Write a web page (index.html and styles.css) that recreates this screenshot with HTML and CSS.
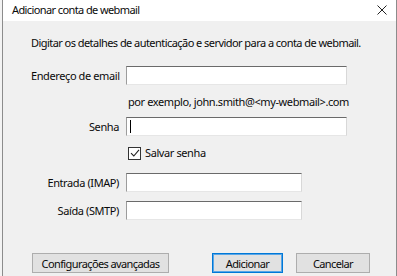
FILE: index.html
```html
<!DOCTYPE html>
<html>
	<head>
		<meta charset="utf-8">
		<title>Adicionar conta de webmail</title>
		<link rel="stylesheet" href="styles.css">
	</head>
	<body>
		<div class="dialog">
			<div class="titlebar">
				<span class="title">Adicionar conta de webmail</span>
				<svg class="close" width="10" height="10" viewBox="0 0 10 10"><path d="M0.5 0.5L9.5 9.5M9.5 0.5L0.5 9.5" stroke="#222" stroke-width="1"/></svg>
			</div>
			<div class="content">
				<p class="intro">Digitar os detalhes de autenticação e servidor para a conta de webmail.</p>
				<div class="form">
					<label class="lbl">Endereço de email</label>
					<div class="field wide"></div>
					<span></span>
					<span class="hint">por exemplo, john.smith@&lt;my-webmail&gt;.com</span>
					<label class="lbl">Senha</label>
					<div class="field wide"><span class="caret"></span></div>
					<span></span>
					<div class="check"><span class="box"><svg width="10" height="10" viewBox="0 0 10 10"><path d="M1 5.2L3.8 8L9 1.8" fill="none" stroke="#222" stroke-width="1.1"/></svg></span>Salvar senha</div>
					<label class="lbl">Entrada (IMAP)</label>
					<div class="field short"></div>
					<label class="lbl">Saída (SMTP)</label>
					<div class="field short"></div>
				</div>
				<div class="buttons">
					<button class="btn adv">Configurações avançadas</button>
					<button class="btn primary">Adicionar</button>
					<button class="btn">Cancelar</button>
				</div>
			</div>
		</div>
	</body>
</html>
```
FILE: styles.css
```css
html,body {margin: 0px;padding: 0px;}
body {background: #f3f3f3;font-family: "Noto Sans", "Open Sans", sans-serif;font-size: 11px;letter-spacing: -0.4px;color: #0a0a0a;white-space: nowrap;}
.dialog {margin-left: 2px;width: 393px;height: 276px;border-left: 1px solid #8c8c8c;border-right: 1px solid #8c8c8c;background: #f0f0f0;display: flex;flex-direction: column;}
.titlebar {height: 21px;background: #fff;display: flex;align-items: center;justify-content: space-between;padding: 0 9px 3px 9px;box-sizing: border-box;}
.title {font-size: 11px;letter-spacing: -0.6px;}
.close {margin-top: 2px;}
.content {flex: 1;display: flex;flex-direction: column;padding: 0 0 0 28px;}
.intro {margin: 13px 0 0 0;line-height: 18px;letter-spacing: -0.55px;}
.form {display: grid;grid-template-columns: 88px auto;column-gap: 7px;row-gap: 9px;margin-top: 14px;align-items: center;}
.lbl {text-align: right;line-height: 19px;}
.field {height: 19px;box-sizing: border-box;background: #fff;border-style: solid;border-width: 1px;border-color: #6a6a6a #d8d8d8 #e6e6e6 #9c9c9c;position: relative;}
.field.wide {width: 221px;}
.field.short {width: 176px;}
.caret {position: absolute;left: 3px;top: 2px;width: 1px;height: 13px;background: #000;}
.hint {margin-left: 2px;margin-bottom: -2px;line-height: 16px;}
.check {display: flex;align-items: center;margin-left: 2px;margin-top: 0px;margin-bottom: 3px;line-height: 16px;}
.box {width: 11px;height: 11px;border: 1px solid #333;background: #fff;margin-right: 4px;display: flex;align-items: center;justify-content: center;}
.buttons {margin-top: auto;margin-bottom: 3px;display: flex;align-items: center;}
.btn {height: 20px;box-sizing: border-box;background: #e1e1e1;border: 1px solid #adadad;font-family: inherit;font-size: 11px;letter-spacing: -0.6px;color: #0a0a0a;padding: 0;}
.btn.adv {width: 137px;margin-left: 1px;}
.btn.primary {width: 71px;margin-left: 43px;border-color: #0078d7;box-shadow: inset 0 0 0 1px #5aa6e6;}
.btn + .btn + .btn {width: 74px;margin-left: 13px;}
```
